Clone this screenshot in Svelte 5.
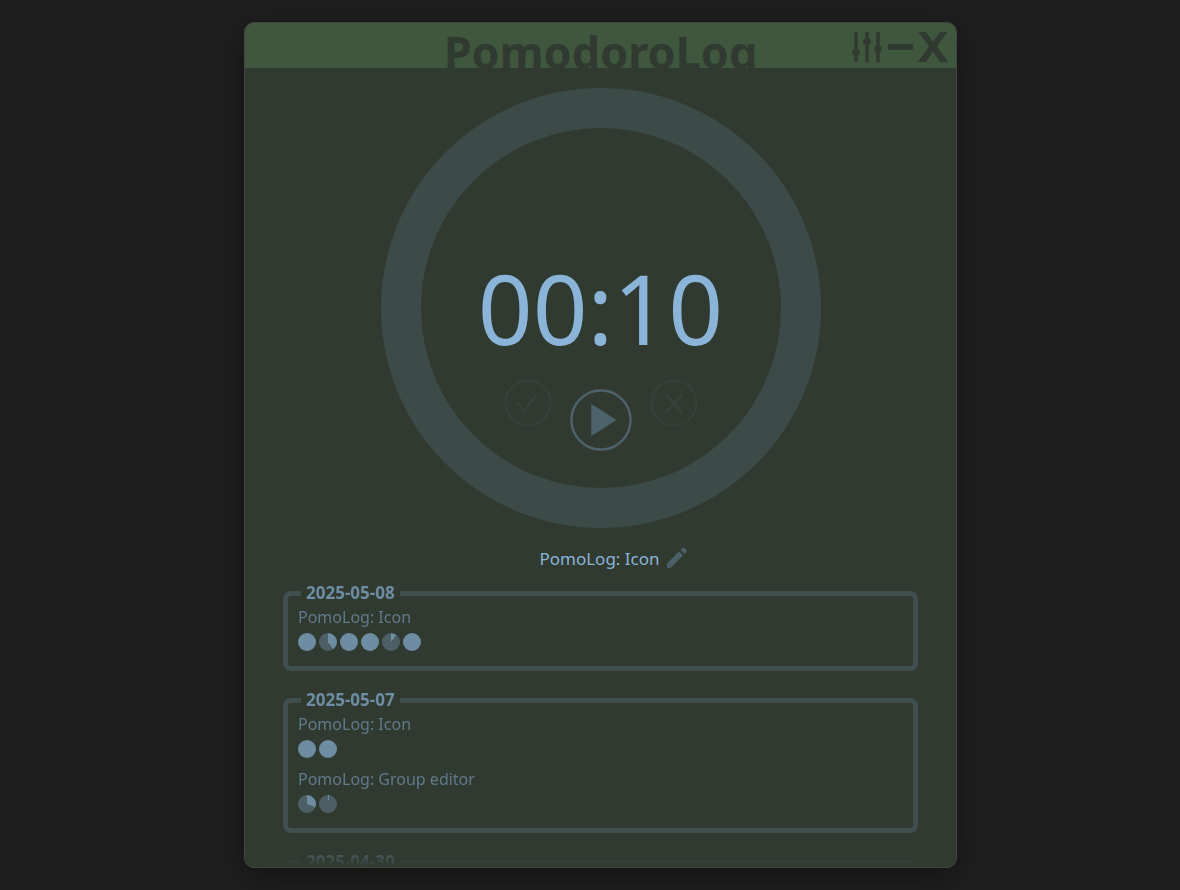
<script>
	let remaining = 10;
	let task = 'PomoLog: Icon';

	// each dot is one pomodoro, the value is the finished share of it
	let days = [
		{
			date: '2025-05-08',
			tasks: [{ name: 'PomoLog: Icon', dots: [1, 0.4, 1, 1, 0.1, 1] }]
		},
		{
			date: '2025-05-07',
			tasks: [
				{ name: 'PomoLog: Icon', dots: [1, 1] },
				{ name: 'PomoLog: Group editor', dots: [0.31, 0.02] }
			]
		},
		{
			date: '2025-04-30',
			tasks: []
		}
	];

	/** @param {number} n */
	const pad = (n) => String(n).padStart(2, '0');

	$: time = pad(Math.floor(remaining / 60)) + ':' + pad(remaining % 60);
</script>

<div class="window">
	<header>
		<h1>PomodoroLog</h1>
		<div class="controls">
			<button aria-label="Settings">
				<svg width="32" height="32" viewBox="0 0 32 32">
					<path d="M5 1v30M16 1v30M27 1v30" stroke="currentColor" stroke-width="3.600" />
					<circle cx="5" cy="21.500" r="3.800" fill="currentColor" />
					<circle cx="16" cy="10.500" r="3.800" fill="currentColor" />
					<circle cx="27" cy="18" r="3.800" fill="currentColor" />
				</svg>
			</button>
			<button aria-label="Minimize">
				<svg width="32" height="32" viewBox="0 0 32 32">
					<rect x="4" y="13" width="25" height="6" rx="1" fill="currentColor" />
				</svg>
			</button>
			<button aria-label="Close">
				<svg width="32" height="32" viewBox="0 0 32 32">
					<path
						d="M1.500 1h7.500l7 10L23 1h7.500L20 15.500 31 31h-8L16 20.500 9 31H1L12 15.500z"
						fill="currentColor"
					/>
				</svg>
			</button>
		</div>
	</header>

	<main>
		<div class="ring">
			<div class="time">{time}</div>
			<div class="actions">
				<button class="small" disabled aria-label="Finish">
					<svg width="48" height="48" viewBox="0 0 48 48" fill="none" stroke="currentColor" stroke-width="2">
						<circle cx="24" cy="24" r="22.500" />
						<path d="M13 23.500l6.500 8.500L33 15" stroke-width="2.500" />
					</svg>
				</button>
				<button class="play" aria-label="Start">
					<svg width="62" height="62" viewBox="0 0 64 64">
						<circle cx="32" cy="32" r="30.500" fill="none" stroke="currentColor" stroke-width="2.500" />
						<path d="M22 15.500v33l26-16.500z" fill="currentColor" />
					</svg>
				</button>
				<button class="small" disabled aria-label="Cancel">
					<svg width="48" height="48" viewBox="0 0 48 48" fill="none" stroke="currentColor" stroke-width="2">
						<circle cx="24" cy="24" r="22.500" />
						<path d="M15.500 15l17 19M32.500 15l-17 19" stroke-width="2.500" />
					</svg>
				</button>
			</div>
		</div>

		<div class="task">
			<span>{task}</span>
			<button aria-label="Edit task">
				<svg width="22" height="22" viewBox="0 0 22 22" fill="currentColor">
					<path d="M1 16.500L13 4.500l4 4L5 20.500q-1 .5-3 .5-1.500-.5-1-4.500z" />
					<path d="M14.500 3l2-2q1-1 2 0l2 2q1 1 0 2l-2 2z" />
				</svg>
			</button>
		</div>

		<div class="log">
			{#each days as day}
				<fieldset>
					<legend>{day.date}</legend>
					{#each day.tasks as item}
						<div class="item">
							<div class="name">{item.name}</div>
							<div class="dots">
								{#each item.dots as done}
									<span class="dot" style="--done: {done * 100}%"></span>
								{/each}
							</div>
						</div>
					{/each}
				</fieldset>
			{/each}
		</div>
	</main>
</div>

<style>
	:global(body) {
		background: #1f1f1f;
	}
	.window {
		display: flex;
		flex-direction: column;
		box-sizing: border-box;
		height: calc(100vh - 44px);
		margin: 22px 223px 22px 244px;
		border: 1px solid #444643;
		border-radius: 10px;
		overflow: hidden;
		background: #313a31;
		color: #8ab4d8;
		font-family: 'Segoe UI', 'Noto Sans', sans-serif;
		box-shadow: 0 8px 30px rgba(0, 0, 0, 0.4);
	}

	header {
		display: grid;
		grid-template-columns: 1fr auto 1fr;
		flex: none;
		height: 45px;
		overflow: hidden;
		background: #3f573d;
		color: #313a31;
	}
	h1 {
		grid-column: 2;
		margin: 0;
		font-size: 45px;
		line-height: 58px;
		font-weight: 700;
	}
	.controls {
		display: flex;
		justify-content: flex-end;
		align-items: flex-start;
		gap: 1px;
		padding: 8px 7px 0 0;
	}

	button {
		display: block;
		padding: 0;
		border: none;
		background: none;
		color: inherit;
		cursor: pointer;
	}
	svg {
		display: block;
	}

	main {
		display: flex;
		flex-direction: column;
		align-items: center;
		flex: 1;
		min-height: 0;
		padding-top: 20px;
	}
	.ring {
		display: flex;
		flex-direction: column;
		align-items: center;
		flex: none;
		box-sizing: border-box;
		width: 440px;
		height: 440px;
		padding-top: 130px;
		border: 40px solid #3d4b48;
		border-radius: 50%;
	}
	.time {
		font-size: 96px;
		line-height: 100px;
	}
	.actions {
		display: flex;
		gap: 18px;
		margin-top: 21px;
	}
	.small {
		height: 48px;
		color: #374139;
	}
	.play {
		margin-top: 10px;
		color: #4d636b;
	}

	.task {
		display: flex;
		align-items: center;
		gap: 6px;
		flex: none;
		height: 24px;
		margin: 18px 0 12px 26px;
		font-size: 17px;
	}
	.task button {
		color: #4b6067;
	}

	.log {
		align-self: stretch;
		flex: 1;
		min-height: 0;
		padding: 0 38px;
		overflow: hidden;
		mask-image: linear-gradient(to top, transparent, #000 32px);
	}
	fieldset {
		min-width: 0;
		margin: 0 0 18px;
		padding: 2px 10px 5px;
		border: 5px solid #40504f;
		border-radius: 8px;
	}
	legend {
		margin-left: 3px;
		padding: 0 5px;
		color: #6e8da2;
		font-size: 17px;
		line-height: 22px;
		font-weight: 700;
	}
	.item {
		margin-bottom: 10px;
	}
	.name {
		color: #5f7a89;
		font-size: 16px;
		line-height: 22px;
	}
	.dots {
		display: flex;
		gap: 3px;
		margin-top: 5px;
	}
	.dot {
		width: 18px;
		height: 18px;
		border-radius: 50%;
		background: conic-gradient(#6e8da2 var(--done), #4c5f64 0);
	}
</style>
